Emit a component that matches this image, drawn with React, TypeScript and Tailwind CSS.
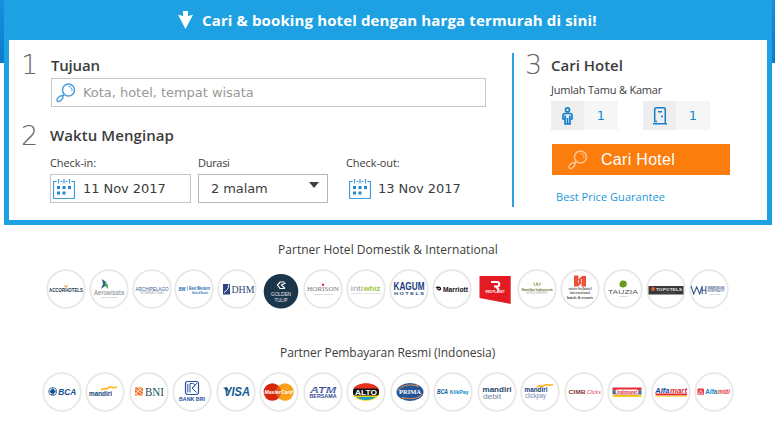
import type { ReactNode } from 'react'

type Logo = { name: string; bare?: boolean; art: ReactNode }

type MarkProps = {
  children: string
  y: number
  w: number
  size: number
  fill: string
  x?: number
  bold?: boolean
  italic?: boolean
  serif?: boolean
}

// One line of a wordmark, centred on x and fitted to the width w
function Mark({ children, y, w, size, fill, x = 0, bold, italic, serif }: MarkProps) {
  return (
    <text
      x={x - w / 2}
      y={y}
      textLength={w}
      lengthAdjust="spacingAndGlyphs"
      fontSize={size}
      fill={fill}
      fontWeight={bold ? 700 : 400}
      fontStyle={italic ? 'italic' : 'normal'}
      fontFamily={serif ? 'Liberation Serif, serif' : 'Liberation Sans, sans-serif'}
    >
      {children}
    </text>
  )
}

const HOTELS: Logo[] = [
  {
    name: 'Accor',
    art: (
      <>
        <path d="M-2-3.500 0-2l2-1.500M0-3.500v2" stroke="#e8a23c" fill="none" />
        <Mark y={2.800} w={34} size={5.500} fill="#1d3450" bold>ACCORHOTELS</Mark>
      </>
    ),
  },
  {
    name: 'Aerowisata',
    art: (
      <>
        <path d="M-7-10-3-7-4-3-8 0-6-5z" fill="#2f5d8c" />
        <path d="M-4-8-1-4v4l-3-3z" fill="#52b152" />
        <Mark y={6} w={30} size={6.500} fill="#7f868c">Aerowisata</Mark>
        <Mark y={9} w={17} size={2.500} fill="#a3a3a3">HOTELS &amp; RESORTS</Mark>
      </>
    ),
  },
  {
    name: 'Archipelago',
    art: (
      <>
        <Mark y={1.500} w={33} size={5.500} fill="#3c5c92">ARCHIPELAGO</Mark>
        <Mark y={5} w={24} size={3} fill="#a0a6b0">INTERNATIONAL</Mark>
      </>
    ),
  },
  {
    name: 'Best Western',
    art: (
      <>
        <Mark x={-12} y={1.500} w={7} size={5} fill="#2268ae" bold italic>BW</Mark>
        <path d="M-6.500-3v5" stroke="#8db2d6" strokeWidth=".8" />
        <Mark x={5.500} y={1.300} w={21} size={4.500} fill="#2268ae" bold>Best Western</Mark>
        <Mark x={6} y={4.500} w={16} size={2.600} fill="#2268ae" bold>Hotels &amp; Resorts</Mark>
      </>
    ),
  },
  {
    name: 'DHM',
    art: (
      <>
        <rect x="-14" y="-5" width="7" height="10.500" fill="#2c4482" />
        <path d="M-8.500-4.500c.5 4-1.500 6-4.500 8" stroke="#fff" fill="none" />
        <Mark x={6} y={4} w={23} size={11} fill="#2d4879" serif>DHM</Mark>
      </>
    ),
  },
  {
    name: 'Golden Tulip',
    bare: true,
    art: (
      <>
        <circle cx="1" cy="2.300" r="17.300" fill="#1b354b" />
        <path d="M4.500-7H0l-2.500 3L0-.5h4.500M5.500-6l-4 2L5-.5" stroke="#fff" strokeWidth="1.200" fill="none" />
        <Mark x={1} y={7} w={20} size={5.200} fill="#e6ebef">GOLDEN</Mark>
        <Mark x={1} y={13.300} w={13} size={5.200} fill="#e6ebef">TULIP</Mark>
      </>
    ),
  },
  {
    name: 'Horison',
    art: (
      <>
        <Mark y={2} w={32} size={7} fill="#777" serif>HORISON</Mark>
        <circle cx="0" cy="-4.300" r="1.200" fill="#e0364d" />
        <Mark y={5.500} w={20} size={2.500} fill="#b3aaaa">HOTELS GROUP</Mark>
      </>
    ),
  },
  {
    name: 'Intiwhiz',
    art: (
      <>
        <Mark x={-9.200} y={2} w={12} size={7.500} fill="#9c9c9c">inti</Mark>
        <Mark x={6} y={2} w={17} size={7.500} fill="#9ac53c" bold>whiz</Mark>
        <Mark y={5.200} w={30} size={2.500} fill="#b5bab0">hospitality management</Mark>
      </>
    ),
  },
  {
    name: 'Kagum',
    art: (
      <>
        <Mark y={1.300} w={31} size={10} fill="#203b80" bold>KAGUM</Mark>
        <Mark y={6.300} w={30} size={3.500} fill="#294783" bold>H O T E L S</Mark>
      </>
    ),
  },
  {
    name: 'Marriott',
    art: (
      <>
        <path d="M-16-1c2-1.500 5-.5 4.500 1s-3.500 1-2.500-.8" stroke="#111" strokeWidth="1.300" fill="none" />
        <Mark x={3.500} y={2.600} w={25} size={8} fill="#111" bold>Marriott</Mark>
      </>
    ),
  },
  {
    name: 'Red Planet',
    bare: true,
    art: (
      <>
        <path d="M-15.500-13h31.200v28l-31.200-6z" fill="#e41b22" />
        <path d="M-4-7h6c3 0 3 4.500 0 4.500h-3M1-2.500 4 1" stroke="#fff" strokeWidth="2" fill="none" />
        <Mark x={0} y={4} w={19} size={3} fill="#fff" bold>RED PLANET</Mark>
      </>
    ),
  },
  {
    name: 'Santika',
    art: (
      <>
        <path d="M-3-6.500v2l1.500 1 1.500-1v-2M0-6.500v2l1.500 1 1.500-1v-2" stroke="#91a150" fill="none" />
        <Mark y={1.500} w={31} size={4.200} fill="#66772f" bold>Santika Indonesia</Mark>
        <Mark y={5} w={21} size={2.800} fill="#999">HOTELS &amp; RESORTS</Mark>
      </>
    ),
  },
  {
    name: 'Swiss-Belhotel',
    art: (
      <>
        <path d="M-6-13.500h4.500v4l3.500-3.500h4v10.500H1.500v-3.500L-2-2.500h-4z" fill="#ef5038" />
        <path d="M-1.500-9v3M1.500-10v3.500" stroke="#fff" strokeWidth=".7" />
        <Mark y={1.200} w={23} size={3.700} fill="#555" bold serif>swiss-belhotel</Mark>
        <Mark y={4.900} w={20} size={3.500} fill="#666" bold serif>international</Mark>
        <Mark y={10} w={26} size={3.800} fill="#444" bold serif>hotels &amp; resorts</Mark>
      </>
    ),
  },
  {
    name: 'Tauzia',
    art: (
      <>
        <path d="M0-8.500c4-.5 5 4 2.500 6.500H.7L0 0l-.7-2h-2C-4.500-5-3-8-.5-8.500z" fill="#6a9b1f" />
        <Mark y={5} w={30} size={6} fill="#555">TAUZIA</Mark>
        <Mark y={7.800} w={9} size={2.300} fill="#aaa">HOTELS</Mark>
      </>
    ),
  },
  {
    name: 'Topotels',
    art: (
      <>
        <rect x="-17.500" y="-3" width="35" height="8.500" fill="#383838" />
        <circle cx="-13" cy="0" r="1.900" fill="#e56335" />
        <Mark x={3} y={1.800} w={26} size={4} fill="#e3e3e3" bold>TOPOTELS</Mark>
        <path d="M-4 3.700h13" stroke="#666" strokeWidth=".5" />
      </>
    ),
  },
  {
    name: 'Waringin',
    art: (
      <>
        <path d="m-18-3 2.700 8 3-7 3 7 2.500-8M-6.800-3v8M-6.800 1.200h3.600M-3.200-3v8" stroke="#3c5d8a" strokeWidth="1.100" fill="none" />
        <Mark x={7} y={0} w={17} size={3} fill="#547198" bold>WARINGIN</Mark>
        <Mark x={7} y={3.200} w={17} size={3} fill="#547198" bold>HOSPITALITY</Mark>
        <Mark x={6} y={6.300} w={11} size={2.200} fill="#8c9eb7">HOTEL GROUP</Mark>
      </>
    ),
  },
]

const PAYMENTS: Logo[] = [
  {
    name: 'BCA',
    art: (
      <>
        <circle cx="-9.300" cy="-.5" r="4" fill="#fff" stroke="#15508c" strokeWidth=".8" />
        <path d="m-9.300-3.500 3 3-2 2h-2l-2-2zM-11 2.500h3.500" fill="#15508c" stroke="#15508c" strokeWidth=".6" />
        <Mark x={5.200} y={3} w={18} size={9.500} fill="#104f94" bold italic>BCA</Mark>
      </>
    ),
  },
  {
    name: 'Mandiri',
    art: (
      <>
        <Mark x={-4.500} y={3.500} w={23} size={7} fill="#174478" bold>mandiri</Mark>
        <path d="M-4-1.500c3-4 4 0 7-2.500s4 1 9-1" stroke="#fbb928" strokeWidth="1.800" fill="none" />
      </>
    ),
  },
  {
    name: 'BNI',
    art: (
      <>
        <rect x="-14" y="-4.500" width="8" height="8" fill="#ef7328" />
        <path d="m-14-3 8 6m-8-2 4 3m-1-8 5 4m-8 2 8-7" stroke="#fff" strokeWidth=".8" />
        <Mark x={5.500} y={4} w={19} size={12} fill="#17505d" serif>BNI</Mark>
      </>
    ),
  },
  {
    name: 'Bank BRI',
    art: (
      <>
        <rect x="-6.500" y="-10.500" width="13" height="13" rx="2" fill="#fff" stroke="#264ca3" strokeWidth="1.200" />
        <path d="M-4.200-8v8.500M-2-8.500h2.500c3 0 2.500 3-.5 4.500l4.500 4.500M-2-8.500v9M5-9 1-4.500" stroke="#264ca3" fill="none" />
        <Mark y={8.500} w={26} size={5.500} fill="#264ca3" bold>BANK BRI</Mark>
      </>
    ),
  },
  {
    name: 'Visa',
    art: (
      <>
        <Mark x={1} y={4.200} w={26} size={12} fill="#175c94" bold italic>VISA</Mark>
        <path d="M-13-4.200h4.500l2 5" fill="#175c94" />
      </>
    ),
  },
  {
    name: 'MasterCard',
    art: (
      <>
        <circle cx="-6.700" cy="0" r="8.700" fill="#d6270b" />
        <circle cx="6" cy="0" r="8.700" fill="#f99f1b" />
        <path d="M-.3-6a8.700 8.700 0 0 1 0 12 8.700 8.700 0 0 1 0-12" fill="#e55b15" />
        <Mark x={-.5} y={2} w={28} size={6} fill="#fff" bold italic>MasterCard</Mark>
      </>
    ),
  },
  {
    name: 'ATM Bersama',
    art: (
      <>
        <Mark y={.8} w={26} size={9.500} fill="#344b99" bold italic>ATM</Mark>
        <path d="M-13-3h27M-13-1h27" stroke="#fff" strokeWidth=".5" />
        <Mark y={5.800} w={27} size={4.700} fill="#344b99" bold>BERSAMA</Mark>
      </>
    ),
  },
  {
    name: 'Alto',
    art: (
      <>
        <path d="M-13-2C-11-11 11-11 13-2z" fill="#e6321e" />
        <path d="M-13 2C-11 11 11 11 13 2z" fill="#f3d61c" />
        <path d="M-9.500 5h19c-4 4-15 4-19 0" fill="#199dc8" />
        <rect x="-13" y="-3.500" width="26" height="7" rx="2.500" fill="#111" />
        <Mark y={2.700} w={22} size={7} fill="#fff" bold>ALTO</Mark>
      </>
    ),
  },
  {
    name: 'Prima',
    art: (
      <>
        <ellipse cx="0" cy="0" rx="13.500" ry="9" fill="#235698" />
        <path d="M-12-1C-9-8 3-8 8-5.500l-2-2M12 2C8 8-3 7-8 5.500l2 2" stroke="#f1913b" fill="none" />
        <Mark y={2} w={22} size={6} fill="#fff" bold serif>PRIMA</Mark>
      </>
    ),
  },
  {
    name: 'BCA KlikPay',
    art: (
      <>
        <Mark x={-10.500} y={2} w={11} size={6.300} fill="#075799" bold italic>BCA</Mark>
        <Mark x={6.200} y={1.900} w={19} size={5} fill="#1687c6" bold>KlikPay</Mark>
      </>
    ),
  },
  {
    name: 'Mandiri Debit',
    art: (
      <>
        <Mark y={-.5} w={29} size={7.700} fill="#29456c" bold>mandiri</Mark>
        <Mark x={-5} y={7} w={18} size={6.800} fill="#71859f">debit</Mark>
      </>
    ),
  },
  {
    name: 'Mandiri Clickpay',
    art: (
      <>
        <Mark x={-4} y={.3} w={23} size={7} fill="#174478" bold>mandiri</Mark>
        <path d="M-3-4.500c3-4 4 0 7-2s4 1 9-1" stroke="#fbb928" strokeWidth="1.800" fill="none" />
        <Mark x={-4.500} y={6.300} w={21} size={6.500} fill="#6f86ad">clickpay</Mark>
      </>
    ),
  },
  {
    name: 'CIMB Clicks',
    art: (
      <>
        <Mark x={-7} y={2.200} w={17} size={5.800} fill="#8b3438" bold>CIMB</Mark>
        <Mark x={9.800} y={2.200} w={14} size={5.800} fill="#dc3c48" italic>Clicks</Mark>
      </>
    ),
  },
  {
    name: 'Indomaret',
    art: (
      <>
        <rect x="-14.500" y="-4.500" width="29" height="3" fill="#e52b37" />
        <rect x="-14.500" y="-1.500" width="29" height="4" fill="#2875bd" />
        <rect x="-14.500" y="2.500" width="29" height="2.500" fill="#f7ce24" />
        <rect x="-11.500" y="-2.700" width="23" height="5.500" rx="2" fill="#fff" stroke="#dc3c45" strokeWidth=".5" />
        <Mark y={1.600} w={20} size={4.700} fill="#d52b3b" bold italic>Indomaret</Mark>
      </>
    ),
  },
  {
    name: 'Alfamart',
    art: (
      <>
        <Mark x={-8.700} y={.8} w={14} size={6.300} fill="#143e9a" bold italic>Alfa</Mark>
        <Mark x={7.500} y={.8} w={17} size={6.300} fill="#dc2b34" bold italic>mart</Mark>
        <path d="M-15.500 2.500h31.500" stroke="#e52631" strokeWidth="2" />
        <path d="M-15.500 4.200h31.500" stroke="#ffd238" strokeWidth="1" />
      </>
    ),
  },
  {
    name: 'Alfamidi',
    art: (
      <>
        <rect x="-16.500" y="-3.500" width="6.500" height="6.500" rx="1" fill="#e73b41" />
        <path d="m-15.500 2 2.200-4 2.200 4z" stroke="#fff" fill="none" strokeWidth=".7" />
        <Mark x={-2.700} y={2.300} w={12} size={6.500} fill="#1480c3" bold>Alfa</Mark>
        <Mark x={9.800} y={2.300} w={12} size={6.500} fill="#e73b41" bold italic>midi</Mark>
      </>
    ),
  },
]

function LogoRow({ logos, className }: { logos: Logo[]; className: string }) {
  return (
    <div className={`flex ${className}`}>
      {logos.map((logo) => (
        <div key={logo.name} className="flex min-w-0 flex-1 justify-center">
          <svg
            role="img"
            aria-label={logo.name}
            width="42"
            height="42"
            viewBox="-21 -21 42 42"
            className="shrink-0 overflow-visible"
          >
            {!logo.bare && <circle r="18.800" fill="#fff" stroke="#e7e7e7" strokeWidth="1.700" />}
            {logo.art}
          </svg>
        </div>
      ))}
    </div>
  )
}

function SearchIcon({ className }: { className: string }) {
  return (
    <svg width="20" height="20" viewBox="0 0 20 20" fill="none" stroke="currentColor" className={className}>
      <circle cx="12.500" cy="7" r="6" strokeWidth="1.500" />
      <path d="M12.500 3.500a3.500 3.500 0 0 1 3.300 4.700" strokeWidth="1" />
      <ellipse cx="3.900" cy="15.700" rx="3.500" ry="2" transform="rotate(-45 3.900 15.700)" strokeWidth="1.400" />
      <path d="m6 13.500 2.300-2.200" strokeWidth="1.800" />
    </svg>
  )
}

function CalendarIcon() {
  return (
    <svg width="22" height="20" viewBox="0 0 22 20" className="shrink-0 text-[#3c9ddb]">
      <path
        d="M3.500 2.500h-3v17h21v-17h-3M7.500 2.500h2M12.500 2.500h2M5.500 0v4.500M11 0v4.500M16.500 0v4.500"
        fill="none"
        stroke="currentColor"
        strokeWidth="1.200"
      />
      <path
        d="M4 7h3v3H4zM9.500 7h3v3h-3zM15 7h3v3h-3zM4 12.500h3v3H4zM9.500 12.500h3v3h-3z"
        fill="#2389cf"
      />
    </svg>
  )
}

function PersonIcon() {
  return (
    <svg width="11" height="18" viewBox="0 0 11 18" fill="none" stroke="#147fca" strokeWidth="1.700">
      <circle cx="5.500" cy="2.900" r="2" />
      <path d="M3 6.500h5c1.400 0 2 .9 2 2V12H8v5H3v-5H1V8.500c0-1.100.6-2 2-2z" />
      <path d="M5.500 11v6M3.200 8.500V12M7.800 8.500V12" />
    </svg>
  )
}

function DoorIcon() {
  return (
    <svg width="14" height="18" viewBox="0 0 14 18" fill="none" stroke="#147fca" strokeWidth="1.500">
      <path d="M0 16.800h14M4 14.500H1.700V2.500C1.700 1.400 2.400.8 3.500.8h7c1.100 0 1.800.6 1.800 1.700v14" />
      <path d="M5 4.700h4M8 9.500h2" />
    </svg>
  )
}

function Step({ n, className = '' }: { n: number; className?: string }) {
  return (
    <div className={`shrink-0 font-['DejaVu_Sans'] text-[27px] leading-[30px] font-extralight text-[#666] ${className}`}>
      {n}
    </div>
  )
}

function Counter({ icon, value }: { icon: ReactNode; value: number }) {
  return (
    <div className="flex h-[29px] text-[#168bd2]">
      <div className="flex w-[33px] items-center justify-center bg-[#eee]">{icon}</div>
      <div className="flex w-[34px] items-center justify-center bg-[#f6f6f6] font-['DejaVu_Sans'] text-[13px]">
        {value}
      </div>
    </div>
  )
}

export default function App() {
  return (
    <div className="h-[424px] w-[775px] overflow-hidden bg-white font-['Open_Sans',sans-serif] text-[#3c3c3c]">
      <div className="h-[63px] bg-linear-to-b from-[#168fdc] to-[#0b7ccf] pr-[3px] pl-1">
        <section className="h-[225px] bg-[#1ea1e2] px-[5px] pb-[5px]">
          <header className="flex h-10 items-center pl-[169px] text-white">
            <svg width="15" height="18" viewBox="0 0 15 18" fill="currentColor">
              <path d="M5 0h5v5l5-1.200L7.500 18 0 3.800 5 5z" />
            </svg>
            <h1 className="ml-[9px] text-[15px] leading-5 font-bold tracking-[0.13px] whitespace-nowrap">
              Cari &amp; booking hotel dengan harga termurah di sini!
            </h1>
          </header>

          <div className="flex h-[180px] bg-white pt-[13px]">
            <div className="w-[503px] pl-3">
              <div className="flex">
                <Step n={1} className="w-[30px] -mt-[3px]" />
                <div>
                  <h2 className="h-[25px] text-[15px] leading-6 font-semibold tracking-[-0.2px]">Tujuan</h2>
                  <div className="flex h-[29px] w-[435px] items-center border border-[#c6c6c6] pl-1">
                    <SearchIcon className="text-[#4b9edb]" />
                    <input
                      placeholder="Kota, hotel, tempat wisata"
                      className="ml-[7px] w-[380px] font-['DejaVu_Sans'] text-[13px] tracking-[-0.03px] outline-none placeholder:text-[#999]"
                    />
                  </div>
                </div>
              </div>

              <div className="mt-4 flex">
                <Step n={2} className="w-[29px] -mt-0.5" />
                <div>
                  <h2 className="h-[31px] text-[15px] leading-6 font-semibold tracking-[0.08px]">Waktu Menginap</h2>
                  <div className="flex">
                    <div className="w-[148px]">
                      <div className="h-5 text-[11px] leading-[18px] tracking-[-0.1px]">Check-in:</div>
                      <div className="flex h-[29px] w-[141px] items-center border border-[#c6c6c6] pl-0.5">
                        <CalendarIcon />
                        <span className="ml-2 font-['DejaVu_Sans'] text-[13px] tracking-[-0.05px]">11 Nov 2017</span>
                      </div>
                    </div>
                    <div className="w-[148px]">
                      <div className="h-5 text-[11px] leading-[18px] tracking-[-0.3px]">Durasi</div>
                      <div className="flex h-[29px] w-[130px] items-center justify-between border border-[#b5b5b5] pr-2 pl-3">
                        <span className="font-['DejaVu_Sans'] text-[13px] tracking-[-0.1px]">2 malam</span>
                        <svg width="10" height="6" viewBox="0 0 10 6" className="mb-2" fill="#404040">
                          <path d="M0 0h10L5 6z" />
                        </svg>
                      </div>
                    </div>
                    <div>
                      <div className="h-5 text-[11px] leading-[18px] tracking-[-0.1px]">Check-out:</div>
                      <div className="flex h-[29px] items-center pl-[3px]">
                        <CalendarIcon />
                        <span className="ml-[7px] font-['DejaVu_Sans'] text-[13px] tracking-[-0.05px] whitespace-nowrap">
                          13 Nov 2017
                        </span>
                      </div>
                    </div>
                  </div>
                </div>
              </div>
            </div>

            <div className="h-[154px] w-0.5 bg-[#309fdf]" />

            <div className="flex pl-[11px]">
              <Step n={3} className="w-[26px] -mt-[3px]" />
              <div>
                <h2 className="h-[27px] text-[15px] leading-6 font-semibold">Cari Hotel</h2>
                <div className="h-[21px] text-[11px] leading-[20px] tracking-[-0.2px]">Jumlah Tamu &amp; Kamar</div>
                <div className="flex gap-[25px]">
                  <Counter icon={<PersonIcon />} value={1} />
                  <Counter icon={<DoorIcon />} value={1} />
                </div>
                <button className="mt-3.5 ml-px flex h-[31px] w-[178px] items-center bg-[#fb7d0e] pl-4 font-['Liberation_Sans'] text-[16px] tracking-[0.3px] text-white">
                  <SearchIcon className="text-[#ffc592]" />
                  <span className="ml-[13px]">Cari Hotel</span>
                </button>
                <a href="#" className="mt-3 ml-[5px] block text-[11px] leading-5 tracking-[0.05px] text-[#2398da]">
                  Best Price Guarantee
                </a>
              </div>
            </div>
          </div>
        </section>
      </div>

      <div className="pt-[178px]">
        <h3 className="pl-[278px] text-[12px] leading-[18px] tracking-[0.03px]">Partner Hotel Domestik &amp; International</h3>
        <LogoRow logos={HOTELS} className="mt-[9px] ml-[44.400px] w-[686px]" />
      </div>
      <div className="pt-[34px]">
        <h3 className="pl-[280px] text-[12px] leading-[18px] tracking-[-0.08px]">Partner Pembayaran Resmi (Indonesia)</h3>
        <LogoRow logos={PAYMENTS} className="mt-[9px] ml-[39.750px] w-[696px]" />
      </div>
    </div>
  )
}
